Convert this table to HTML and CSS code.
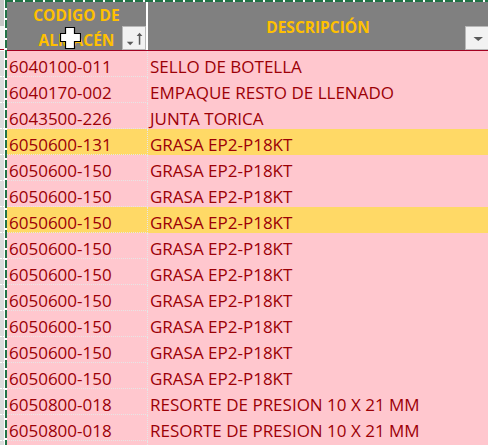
FILE: index.html
```html
<!DOCTYPE html>
<html lang="es">
<head>
<meta charset="utf-8">
<title>Hoja</title>
<link rel="stylesheet" href="styles.css">
</head>
<body>
<div class="sheet">
  <div class="rowheads">
    <div class="rh-head"><span class="rh-top"></span><span class="rh-bot"></span></div>
    <div class="rh"></div><div class="rh"></div><div class="rh"></div><div class="rh"></div>
    <div class="rh"></div><div class="rh"></div><div class="rh"></div><div class="rh"></div>
    <div class="rh"></div><div class="rh"></div><div class="rh"></div><div class="rh"></div>
    <div class="rh"></div><div class="rh"></div><div class="rh"></div><div class="rh"></div>
  </div>
  <div class="table">
    <div class="thead">
      <div class="th th-code">
        <span class="th-label">CODIGO DE<br>ALMACÉN</span>
        <span class="filter">
          <svg width="23" height="23" viewBox="0 0 23 23"><polygon points="4,15 11,15 7.5,18.5" fill="#5a5a5a"/><rect x="16.5" y="8" width="1.6" height="10" fill="#5a5a5a"/><polygon points="14.3,9 20.3,9 17.3,5.5" fill="#5a5a5a"/></svg>
        </span>
        <svg class="cursor" width="21" height="22" viewBox="0 0 21 22"><polygon points="5.5,0.5 14.5,0.5 14.5,6.5 20.5,6.5 20.5,14.5 14.5,14.5 14.5,21.5 5.5,21.5 5.5,14.5 0.5,14.5 0.5,6.5 5.5,6.5" fill="#fff" stroke="#000" stroke-width="1.2"/></svg>
      </div>
      <div class="th th-desc">
        <span class="th-label">DESCRIPCIÓN</span>
        <span class="filter filter-end">
          <svg width="22" height="23" viewBox="0 0 22 23"><polygon points="7.5,10 17,10 12.25,14" fill="#595959"/></svg>
        </span>
      </div>
    </div>
    <div class="row"><div class="c1">6040100-011</div><div class="c2">SELLO DE BOTELLA</div></div>
    <div class="row"><div class="c1">6040170-002</div><div class="c2">EMPAQUE RESTO DE LLENADO</div></div>
    <div class="row"><div class="c1">6043500-226</div><div class="c2">JUNTA TORICA</div></div>
    <div class="row hl"><div class="c1">6050600-131</div><div class="c2">GRASA EP2-P18KT</div></div>
    <div class="row"><div class="c1">6050600-150</div><div class="c2">GRASA EP2-P18KT</div></div>
    <div class="row"><div class="c1">6050600-150</div><div class="c2">GRASA EP2-P18KT</div></div>
    <div class="row hl"><div class="c1">6050600-150</div><div class="c2">GRASA EP2-P18KT</div></div>
    <div class="row"><div class="c1">6050600-150</div><div class="c2">GRASA EP2-P18KT</div></div>
    <div class="row"><div class="c1">6050600-150</div><div class="c2">GRASA EP2-P18KT</div></div>
    <div class="row"><div class="c1">6050600-150</div><div class="c2">GRASA EP2-P18KT</div></div>
    <div class="row"><div class="c1">6050600-150</div><div class="c2">GRASA EP2-P18KT</div></div>
    <div class="row"><div class="c1">6050600-150</div><div class="c2">GRASA EP2-P18KT</div></div>
    <div class="row"><div class="c1">6050600-150</div><div class="c2">GRASA EP2-P18KT</div></div>
    <div class="row"><div class="c1">6050800-018</div><div class="c2">RESORTE DE PRESION 10 X 21 MM</div></div>
    <div class="row"><div class="c1">6050800-018</div><div class="c2">RESORTE DE PRESION 10 X 21 MM</div></div>
    <div class="row"><div class="c1"></div><div class="c2"></div></div>
  </div>
</div>
</body>
</html>
```
FILE: styles.css
```css
* { box-sizing: border-box; }
html, body {
  margin: 0;
  padding: 0;
  background: #fff;
}
body {
  width: 488px;
  height: 445px;
  overflow: hidden;
  font-family: "Open Sans", "Liberation Sans", sans-serif;
}
.sheet {
  display: flex;
  align-items: flex-start;
}
.rowheads {
  width: 5px;
  flex: none;
  display: flex;
  flex-direction: column;
  border-right: 1px solid #fff;
}
.rh-head {
  height: 51px;
  display: flex;
  flex-direction: column;
}
.rh-top { height: 26px; background: #c6c6c6; }
.rh-bot { height: 24px; background: #f4f4f4; border-bottom: 1px solid #a50021; }
.rh {
  height: 26px;
  flex: none;
  background: #dcdcdc;
  border-bottom: 1px dotted #fff;
}
.table {
  position: relative;
  flex: 1;
  padding-left: 2px;
  padding-top: 2px;
}
.table::before {
  content: "";
  position: absolute;
  left: 0; right: 0; top: 0;
  height: 2px;
  background: repeating-linear-gradient(to right, #217346 0 8px, #fff 8px 10px);
  z-index: 2;
}
.table::after {
  content: "";
  position: absolute;
  left: 0; top: 0; bottom: 0;
  width: 2px;
  background: repeating-linear-gradient(to bottom, #217346 0 8px, #fff 8px 10px);
  z-index: 2;
}
.thead {
  display: flex;
  height: 49px;
  background: #808080;
  border-bottom: 1px solid #a50021;
}
.th {
  position: relative;
  height: 48px;
  color: #ffc000;
  font-weight: 700;
  font-size: 15.5px;
  text-align: center;
}
.th-code {
  width: 141px;
  flex: none;
  border-right: 2px solid #fff;
  line-height: 25px;
  padding-top: 1px;
}
.th-desc {
  flex: 1;
  line-height: 48px;
  padding-top: 1px;
}
.filter {
  position: absolute;
  right: 0;
  bottom: 0;
  width: 24px;
  height: 24px;
  background: #f2f2f2;
  border: 1px solid #b8b8b8;
  display: flex;
}
.filter-end {
  width: 23px;
  border-right: none;
}
.cursor {
  position: absolute;
  left: 53px;
  top: 25px;
}
.row {
  display: flex;
  height: 26px;
  background: #ffc7ce;
  color: #9c0006;
  font-size: 17px;
  line-height: 19px;
}
.row.hl { background: #ffd966; }
.c1 {
  width: 141px;
  flex: none;
  height: 26px;
  padding: 6px 0 0 2px;
  border-right: 1px dotted #e6e6e6;
  border-bottom: 1px dotted #e6e6e6;
  white-space: nowrap;
}
.c2 {
  flex: 1;
  height: 26px;
  padding: 6px 0 0 2px;
  white-space: nowrap;
}
```
